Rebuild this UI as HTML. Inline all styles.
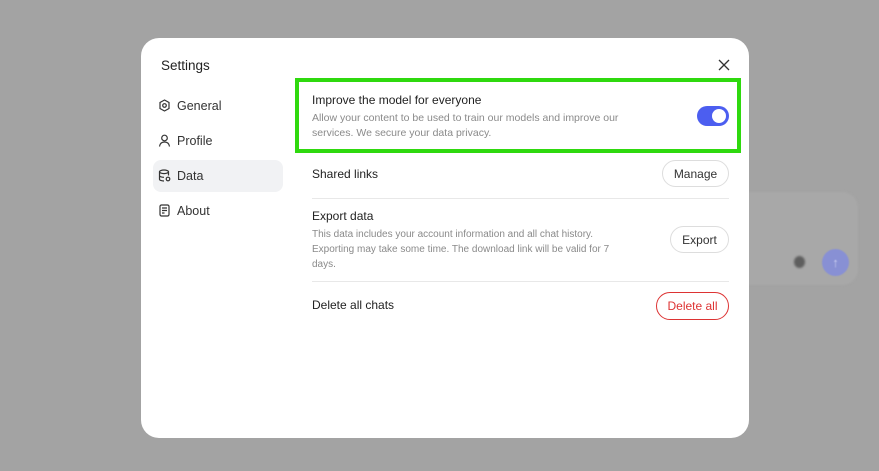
<!DOCTYPE html>
<html><head><style>
body{margin:0;width:879px;height:471px;background:#a3a3a3;position:relative;overflow:hidden;font-family:"Liberation Sans",sans-serif;}
.bgbox{position:absolute;left:700px;top:192px;width:158px;height:93px;border-radius:16px;background:#a8a8a8;filter:blur(1px);}
.modal{position:absolute;left:141px;top:38px;width:608px;height:400px;background:#fff;border-radius:18px;}
.t{position:absolute;color:#222;font-size:13px;}
.s{position:absolute;color:#8a8a8a;font-size:10.5px;line-height:15px;}
.nav{position:absolute;left:12px;width:130px;height:32px;font-size:12.5px;color:#333;}
.nav svg{position:absolute;left:5px;top:9px}
.nav span{position:absolute;left:24px;top:9px}
.btn{position:absolute;border:1px solid #ddd;border-radius:15px;height:27px;font-size:12px;color:#333;text-align:center;line-height:26px;box-sizing:border-box;}
.hr{position:absolute;left:171px;width:417px;height:1px;background:#e8e8e8;}
</style></head><body>
<div class="bgbox"></div>
<div style="position:absolute;left:794px;top:256px;width:11px;height:12px;border-radius:50%;background:#5e5e5e;filter:blur(1px)"></div>
<div style="position:absolute;left:822px;top:249px;width:27px;height:27px;border-radius:50%;background:#8890d4;color:#c8ccf0;text-align:center;line-height:27px;font-size:13px;filter:blur(0.5px)">↑</div>
<div class="modal">
 <div class="t" style="left:20px;top:20px;font-size:13.5px">Settings</div>
 <svg style="position:absolute;left:577px;top:21px" width="12" height="12" viewBox="0 0 12 12"><path d="M1 1L11 11M11 1L1 11" stroke="#333" stroke-width="1.3"/></svg>
 <div class="nav" style="top:52px"><svg width="13" height="13" viewBox="0 0 13 13" fill="none" stroke="#333" stroke-width="1.2"><path d="M6.5 1L11 3.5V9.5L6.5 12L2 9.5V3.5Z"/><circle cx="6.5" cy="6.5" r="1.8"/></svg><span>General</span></div>
 <div class="nav" style="top:87px"><svg width="13" height="13" viewBox="0 0 13 13" fill="none" stroke="#333" stroke-width="1.2"><circle cx="6.5" cy="4" r="2.8"/><path d="M1.5 12.5C2 9 4 8 6.5 8S11 9 11.5 12.5"/></svg><span>Profile</span></div>
 <div class="nav" style="top:122px;background:#f1f2f4;border-radius:8px;width:130px"><svg width="13" height="13" viewBox="0 0 13 13" fill="none" stroke="#333" stroke-width="1.2"><ellipse cx="6" cy="2.8" rx="4.5" ry="1.8"/><path d="M1.5 2.8V10.2C1.5 11.2 3.5 12 6 12M10.5 2.8V6.5M1.5 6.5C1.5 7.5 3.5 8.3 6 8.3"/><circle cx="10" cy="10" r="1.8"/></svg><span>Data</span></div>
 <div class="nav" style="top:157px"><svg width="13" height="13" viewBox="0 0 13 13" fill="none" stroke="#333" stroke-width="1.2"><rect x="2" y="1" width="9" height="11" rx="1.5"/><path d="M4 4H9M4 6.5H9M4 9H6.5"/></svg><span>About</span></div>

 <div style="position:absolute;left:154px;top:40px;width:446px;height:75px;border:4px solid #2fd90e;box-sizing:border-box"></div>
 <div class="t" style="left:171px;top:55px;font-size:12px">Improve the model for everyone</div>
 <div class="s" style="left:171px;top:73px">Allow your content to be used to train our models and improve our<br>services. We secure your data privacy.</div>
 <div style="position:absolute;left:556px;top:68px;width:32px;height:20px;border-radius:10px;background:#4c5ef0"><div style="position:absolute;right:3px;top:3px;width:14px;height:14px;border-radius:50%;background:#fff"></div></div>

 <div class="t" style="left:171px;top:129px;font-size:12px">Shared links</div>
 <div class="btn" style="left:521px;top:122px;width:67px">Manage</div>
 <div class="hr" style="top:160px"></div>
 <div class="t" style="left:171px;top:171px;font-size:12px">Export data</div>
 <div class="s" style="left:171px;top:189px;font-size:10px">This data includes your account information and all chat history.<br>Exporting may take some time. The download link will be valid for 7<br>days.</div>
 <div class="btn" style="left:529px;top:188px;width:59px">Export</div>
 <div class="hr" style="top:243px"></div>
 <div class="t" style="left:171px;top:260px;font-size:12px">Delete all chats</div>
 <div class="btn" style="left:515px;top:254px;width:73px;height:28px;line-height:26px;border-color:#d33;color:#d33">Delete all</div>
</div>
</body></html>
